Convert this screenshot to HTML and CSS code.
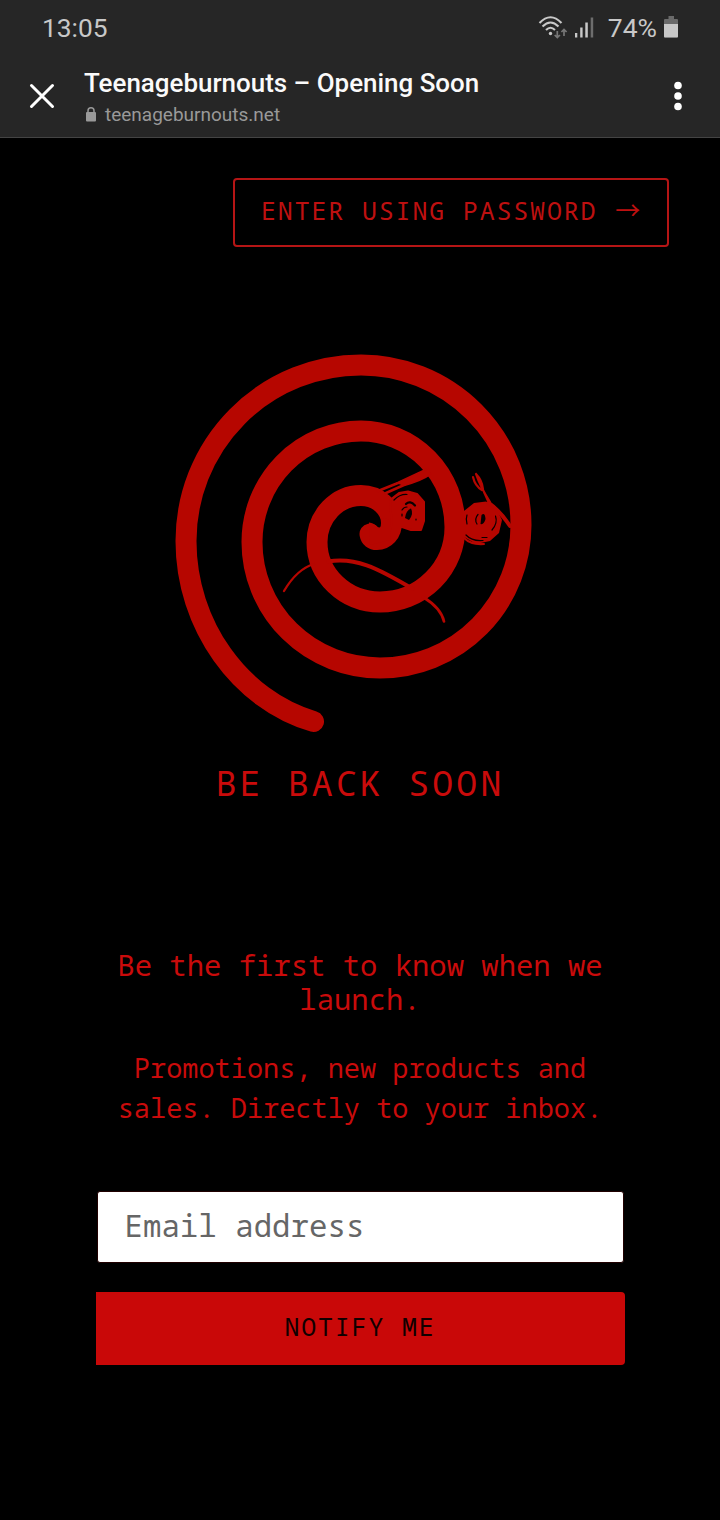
FILE: index.html
```html
<!DOCTYPE html>
<html lang="en">
<head>
<meta charset="utf-8">
<title>Teenageburnouts – Opening Soon</title>
<link rel="stylesheet" href="styles.css">
</head>
<body>
<header class="chrome">
  <div class="status">
    <span class="clock">13:05</span>
    <div class="indicators">
      <svg class="wifi" width="30" height="24" viewBox="0 0 30 24" fill="none" stroke="#c8c8c8" stroke-width="2.1">
        <path d="M1.500 8Q12.500-3.500 23.500 8M4.500 11.500Q12.500 3.500 20.500 11.500M8 15Q12.500 10.500 17 15"/>
        <circle cx="12.500" cy="18.500" r="1.700" fill="#c8c8c8" stroke="none"/>
        <path stroke="#777" stroke-width="1.700" d="M19.300 16v6.500M16.700 20l2.600 2.600 2.600-2.600M26 21v-6.500M23.400 17l2.600-2.600 2.600 2.600"/>
      </svg>
      <svg class="signal" width="19" height="21" viewBox="0 0 19 21" fill="#c8c8c8">
        <path d="M0 16h2.300v4.500H0zM5.200 10.500h2.400v10H5.200zM10.300 5.500h2.500v15h-2.500z"/>
        <path fill="#6d6d6d" d="M15.700.5h2.500v20h-2.500z"/>
      </svg>
      <span class="percent">74%</span>
      <svg class="battery" width="14" height="22" viewBox="0 0 14 22">
        <path fill="#6a6a6a" d="M4.500 0h5.500v3h3q1 0 1 1v17q0 1-1 1H1q-1 0-1-1V4q0-1 1-1h3.500z"/>
        <path fill="#c8c8c8" d="M0 8h14v12.500q0 .8-1 .8H1q-1 0-1-.8z"/>
      </svg>
    </div>
  </div>
  <div class="toolbar">
    <svg class="close" width="26" height="26" viewBox="0 0 26 26" stroke="#fff" stroke-width="3" stroke-linecap="round"><path d="M2.500 2.500l21 21M23.500 2.500l-21 21"/></svg>
    <div class="page-info">
      <div class="page-title">Teenageburnouts – Opening Soon</div>
      <div class="page-url">
        <svg width="10" height="15" viewBox="0 0 10 15"><rect y="5" width="10" height="9.500" rx="1" fill="#999"/><path d="M2 6V3.800a3 3 0 0 1 6 0V6" fill="none" stroke="#999" stroke-width="1.500"/></svg>
        <span>teenageburnouts.net</span>
      </div>
    </div>
    <svg class="more" width="8" height="30" viewBox="0 0 8 30" fill="#fff"><circle cx="4" cy="4.500" r="3.800"/><circle cx="4" cy="15" r="3.800"/><circle cx="4" cy="25.500" r="3.800"/></svg>
  </div>
</header>
<main class="page">
  <a class="password">ENTER USING PASSWORD <span class="arrow">→</span></a>
  <svg class="logo" width="380" height="400" viewBox="170 345 380 400" fill="none" stroke="#b60600" stroke-linecap="round" stroke-linejoin="round">
    <path stroke-width="21" d="M313.500 721.500C240 700 186 625 186 541A175 176 0 0 1 361 365A160 160 0 0 1 521 525A141 143 0 0 1 380 668A128 126 0 0 1 252 542A109 111 0 0 1 361 431A94 96 0 0 1 455 527A75 75 0 0 1 380 602A63 60 0 0 1 317 542A44 47 0 0 1 361 495.500C378 495.500 391.500 508 391.500 523C391.500 533 385 539.500 377 539.500Q371 539.500 370 534"/>
    <path fill="#b60600" stroke="none" d="M369 522.500Q374 523 376 526Q378 528 381 527.500L382 518L392 520L390 540L370 545Z"/>
    <path stroke-width="2.300" d="M284 591Q297 569 314 564"/>
    <path stroke-width="4" d="M328 561.500C355 557 376 567 413 589"/>
    <path stroke-width="2.700" d="M423 597Q441 608 444 621.500"/>
    <path stroke-width="2.500" d="M378 491L398 483L428 469M386 493L404 485Q422 480 430 474"/>
    <path fill="#b60600" stroke="none" d="M396 483L429 469L431 475L404 486Z"/>
    <path fill="#b60600" stroke-width="2" d="M390 500L399 493L408 491.500L417 494L424 502V521L421 530H411L402 527L392 527Z"/>
    <path stroke="#080000" stroke-width="2.200" d="M406 504Q410 500 415 505.500"/>
    <path stroke="#080000" stroke-width="1.200" d="M402 510Q404 507 407 507M402 514v2M416 519v1M394 500Q400 494 407 494.500"/>
    <path fill="#080000" stroke="none" d="M405 518Q406 510 411 508.500Q414 514 409 520Z"/>
    <path fill="#b60600" stroke="none" d="M464 511L474 503L486 501.500L495 506L502 520L499 533L490 541L476 544L464 537Z"/>
    <path fill="#080000" stroke="none" d="M481.500 515Q485 512 485.500 519Q484 525 480.500 524Z"/>
    <path stroke="#080000" stroke-width="1.200" d="M478 514.500Q474 519 477 524M495.500 516Q498 523 492 530M466 535Q472 541.500 483 540.500M482 537.500H487M467 515Q465.500 519 467 524"/>
    <path stroke-width="2" d="M464 538Q471 545 484 544"/>
    <path stroke-width="2.200" d="M476 474Q480 486 490 502M473 477Q475 486 482 490M476 474Q482 480 483 489M484 492L489 503"/>
    <path stroke-width="4" d="M489 503Q500 511 510 526"/>
  </svg>
  <h1 class="headline">BE BACK SOON</h1>
  <section class="signup">
    <h2 class="lead">Be the first to know when we launch.</h2>
    <p class="details">Promotions, new products and<br>sales. Directly to your inbox.</p>
    <form class="form">
      <input class="email" type="email" placeholder="Email address" aria-label="Email address">
      <button class="notify" type="button">NOTIFY ME</button>
    </form>
  </section>
</main>
</body>
</html>
```
FILE: styles.css
```css
* { box-sizing: border-box; }
body {
  margin: 0;
  width: 720px;
  height: 1520px;
  overflow: hidden;
  background: #000;
  color: #c90b0b;
  font-family: "Droid Sans Mono", "Noto Sans Mono", "DejaVu Sans Mono", monospace;
}
h1, h2, p { margin: 0; font-weight: 400; }
svg { display: block; flex: none; }
.chrome {
  height: 138px;
  background: #262626;
  border-bottom: 1px solid #444;
  font-family: Roboto, sans-serif;
}
.status {
  height: 54px;
  padding: 0 42px;
  display: flex;
  align-items: center;
  justify-content: space-between;
  color: #c8c8c8;
}
.clock { font-size: 26.300px; padding-top: 2px; }
.indicators { display: flex; align-items: center; }
.wifi { margin-right: 1px; }
.signal { margin-left: 6px; }
.percent { margin-left: 14px; font-size: 26.500px; }
.battery { margin-left: 7px; }
.toolbar {
  height: 84px;
  padding: 0 38px 0 29px;
  display: flex;
  align-items: center;
}
.page-info { flex: 1; margin: 2px 0 0 29px; }
.page-title { color: #fafafa; font-size: 25.950px; font-weight: 500; line-height: 34px; white-space: nowrap; }
.page-url {
  display: flex;
  align-items: center;
  gap: 9px;
  padding-left: 2px;
  color: #999;
  font-size: 19px;
  line-height: 29px;
}
.page {
  display: flex;
  flex-direction: column;
  align-items: center;
  padding-top: 42px;
}
.password {
  align-self: flex-end;
  width: 436px;
  height: 69px;
  margin: -2px 51px 0 0;
  padding-left: 26px;
  border: 2px solid #b51515;
  border-radius: 4px;
  color: #be1010;
  font-size: 25px;
  line-height: 61px;
  letter-spacing: 1.820px;
  white-space: nowrap;
}
.arrow { font-family: "Noto Sans CJK JP", sans-serif; line-height: 1; margin-left: 1px; }
.logo { margin: 98px 0 0; }
.headline {
  margin-top: 14px;
  font-size: 34.800px;
  line-height: 48px;
  letter-spacing: 3.200px;
}
.signup { width: 529px; margin-top: 141px; text-align: center; }
.lead { font-size: 28.900px; line-height: 34px; }
.details { margin-top: 32px; font-size: 26.930px; line-height: 40px; }
.form { margin-top: 63px; display: flex; flex-direction: column; gap: 29px; }
.email {
  height: 72px;
  margin: 0 1px;
  padding: 0 27px 4px;
  border: 1px solid #200000;
  border-radius: 3px;
  background: #fff;
  font-family: inherit;
  font-size: 30.750px;
}
.email::placeholder { color: #666; opacity: 1; }
.notify {
  height: 73px;
  padding: 0 0 5px;
  border: 0;
  border-radius: 0 4px 4px 0;
  background: #c90808;
  color: #100000;
  font-family: inherit;
  font-size: 25px;
  letter-spacing: 1.800px;
}
```
